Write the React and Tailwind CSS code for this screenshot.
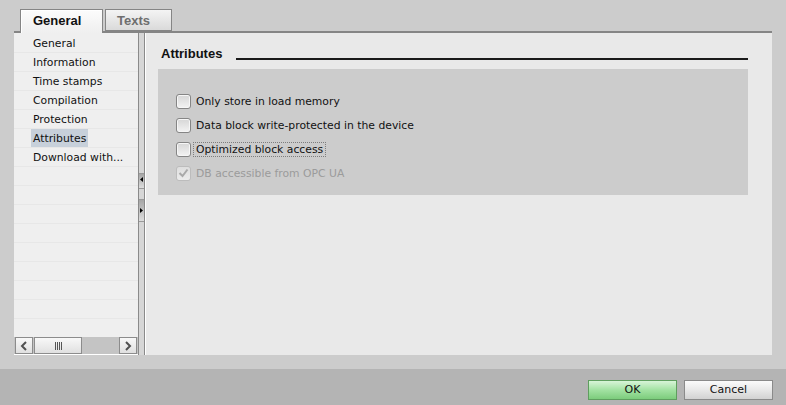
const rows = [
  "General",
  "Information",
  "Time stamps",
  "Compilation",
  "Protection",
  "Attributes",
  "Download with...",
  "", "", "", "", "", "", "", "", "", "",
];

const options = [
  { label: "Only store in load memory" },
  { label: "Data block write-protected in the device" },
  { label: "Optimized block access", focus: true },
  { label: "DB accessible from OPC UA", disabled: true, checked: true },
];

function Chevron({ dir }) {
  return (
    <svg width="8" height="10" viewBox="0 0 8 10">
      {dir === "left" ? (
        <polyline points="6,1 2,5 6,9" fill="none" stroke="#505050" strokeWidth="2" />
      ) : (
        <polyline points="2,1 6,5 2,9" fill="none" stroke="#505050" strokeWidth="2" />
      )}
    </svg>
  );
}

function Checkbox({ disabled, checked }) {
  return (
    <div
      className={
        disabled
          ? "w-[15px] h-[15px] rounded-[3px] border border-[#bcbcbc] bg-linear-to-b from-[#dedede] to-[#ececec] flex items-center justify-center"
          : "w-[15px] h-[15px] rounded-[3px] border border-[#858585] bg-linear-to-b from-[#d6d6d6] to-[#f3f3f3] shadow-[inset_0_0_0_1px_#f6f6f6] flex items-center justify-center"
      }
    >
      {checked && (
        <svg width="11" height="10" viewBox="0 0 11 10">
          <polyline points="1.5,5 4.5,8 9.5,1.5" fill="none" stroke="#a9a9a9" strokeWidth="2" />
        </svg>
      )}
    </div>
  );
}

export default function App() {
  return (
    <div className="w-[786px] h-[405px] bg-[#cccccc] flex flex-col overflow-hidden font-['DejaVu_Sans',sans-serif] text-[#111]">
      <div className="flex-1 flex flex-col pt-[9px] px-[14px] pb-[14px]">
        {/* tabs */}
        <div className="flex h-[22px] pl-[6px] gap-[2px] relative z-10">
          <div className="w-[83px] h-[24px] border border-b-0 border-[#858585] bg-linear-to-b from-[#fcfcfc] to-[#efefef] shadow-[inset_1px_1px_0_#ffffff] pl-[12px] pt-[3px] font-['Liberation_Sans',sans-serif] font-bold text-[13px] leading-[16px] text-[#111]">
            General
          </div>
          <div className="w-[67px] h-[22px] border border-[#858585] bg-linear-to-b from-[#f4f4f4] to-[#dadada] pl-[11px] pt-[3px] font-['Liberation_Sans',sans-serif] font-bold text-[13px] leading-[16px] text-[#6e6e6e]">
            Texts
          </div>
        </div>
        {/* panel */}
        <div className="h-[324px] flex flex-col border-t-2 border-[#858585]">
          <div className="flex-1 flex min-h-0">
            {/* list */}
            <div className="w-[124px] flex flex-col bg-[#efefef]">
              <div className="flex-1 overflow-hidden pt-[1px]">
                {rows.map((r, i) => (
                  <div
                    key={i}
                    className="h-[19px] border-b border-[#e7e7e7] flex items-center pl-[17px] text-[10.8px]"
                  >
                    <span
                      className={
                        r === "Attributes"
                          ? "px-[2px] pt-[1px] leading-[17px] bg-[#c7d0da]"
                          : "px-[2px] pt-[1px] leading-[17px]"
                      }
                    >
                      {r}
                    </span>
                  </div>
                ))}
              </div>
              <div className="h-[18px] bg-[#c4c4c4] flex px-[1px] border-b border-white">
                <div className="w-[18px] border border-[#8c8c8c] bg-linear-to-b from-[#f8f8f8] to-[#e0e0e0] flex items-center justify-center">
                  <Chevron dir="left" />
                </div>
                <div className="w-[48px] ml-[1px] border border-[#8c8c8c] bg-linear-to-b from-[#f8f8f8] to-[#e0e0e0] flex items-center justify-center gap-[1px]">
                  <div className="w-[1px] h-[8px] bg-[#555]" />
                  <div className="w-[1px] h-[8px] bg-[#555]" />
                  <div className="w-[1px] h-[8px] bg-[#555]" />
                  <div className="w-[1px] h-[8px] bg-[#555]" />
                </div>
                <div className="flex-1" />
                <div className="w-[18px] border border-[#8c8c8c] bg-linear-to-b from-[#f8f8f8] to-[#e0e0e0] flex items-center justify-center">
                  <Chevron dir="right" />
                </div>
              </div>
            </div>
            {/* splitter */}
            <div className="w-[8px] flex">
              <div className="w-[1px] bg-[#8a8a8a]" />
              <div className="w-[5px] bg-[#d6d6d6] flex flex-col">
                <div className="h-[140px]" />
                <div className="h-[16px] border-y border-[#9a9a9a] bg-linear-to-b from-[#a6a6a6] to-[#dddddd] flex items-center justify-center pb-[4px]">
                  <svg width="3" height="5" viewBox="0 0 3 5">
                    <polygon points="3,0 0,2.5 3,5" fill="#000" />
                  </svg>
                </div>
                <div className="h-[10px]" />
                <div className="h-[23px] border-y border-[#9a9a9a] bg-linear-to-b from-[#a6a6a6] to-[#dddddd] flex items-center justify-center">
                  <svg width="3" height="5" viewBox="0 0 3 5">
                    <polygon points="0,0 3,2.5 0,5" fill="#000" />
                  </svg>
                </div>
              </div>
              <div className="w-[1px] bg-[#8a8a8a]" />
              <div className="w-[1px] bg-white" />
            </div>
            {/* content */}
            <div className="flex-1 bg-[#e9e9e9] pl-[12px] pr-[24px] pt-[13px]">
              <div className="flex items-start h-[16px] pl-[3px]">
                <span className="font-['Liberation_Sans',sans-serif] font-bold text-[13px] leading-[16px] text-[#111]">
                  Attributes
                </span>
                <div className="flex-1 ml-[14px] mt-[12px] h-[2px] bg-[#1a1a1a]" />
              </div>
              <div className="mt-[7px] bg-[#cccccc] pt-[20px] pb-[10px] pl-[18px] flex flex-col">
                {options.map((o, i) => (
                  <div key={i} className="h-[24px] flex items-center">
                    <Checkbox disabled={o.disabled} checked={o.checked} />
                    <span
                      className={
                        o.focus
                          ? "ml-[2px] px-[2px] border border-dotted border-[#7d7d7d] text-[10.8px] leading-[13px]"
                          : o.disabled
                          ? "ml-[2px] px-[2px] border border-transparent text-[10.8px] leading-[13px] text-[#9b9b9b]"
                          : "ml-[2px] px-[2px] border border-transparent text-[10.8px] leading-[13px]"
                      }
                    >
                      {o.label}
                    </span>
                  </div>
                ))}
              </div>
            </div>
          </div>
        </div>
      </div>
      {/* bottom bar */}
      <div className="h-[36px] bg-[#b4b4b4] flex justify-end items-start pt-[11px] pr-[13px] gap-[7px]">
        <div className="w-[89px] h-[20px] border border-[#5e9e5e] bg-linear-to-b from-[#d8f4d8] via-[#a2e2a2] to-[#7ccc7c] flex items-center justify-center text-[11px] text-[#111]">
          OK
        </div>
        <div className="w-[89px] h-[20px] border border-[#8a8a8a] bg-linear-to-b from-[#fbfbfb] via-[#e8e8e8] to-[#d2d2d2] flex items-center justify-center text-[11px] text-[#111]">
          Cancel
        </div>
      </div>
    </div>
  );
}
